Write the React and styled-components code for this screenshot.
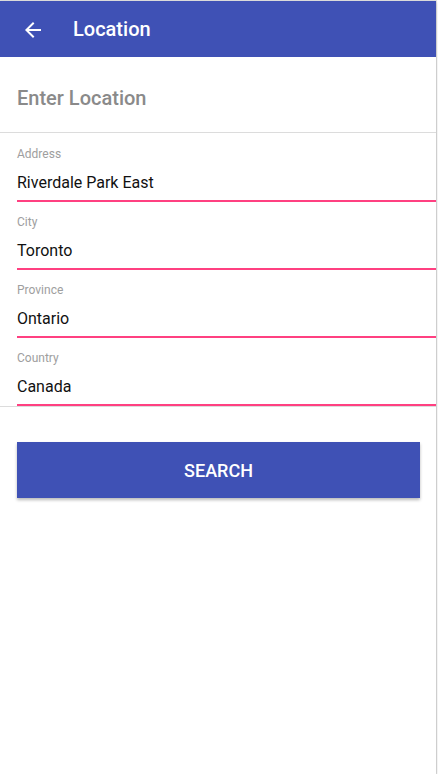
import styled, { createGlobalStyle } from 'styled-components';

const GlobalStyle = createGlobalStyle`
  html, body {
    margin: 0;
    padding: 0;
    background: #ffffff;
    font-family: 'Roboto', 'Liberation Sans', sans-serif;
  }
`;

const Screen = styled.div`
  width: 436px;
  height: 773px;
  margin-top: 1px;
  background: #ffffff;
  box-shadow: 0 1px 3px rgba(0, 0, 0, 0.25), 0 0 0 1px #e4e4e4;
  display: flex;
  flex-direction: column;
`;

const AppBar = styled.header`
  height: 56px;
  background: #3f51b5;
  display: flex;
  align-items: center;
  padding-left: 21px;
  box-sizing: border-box;
  flex-shrink: 0;
`;

const BackIcon = styled.svg`
  width: 24px;
  height: 24px;
  fill: #ffffff;
  margin-top: 1px;
`;

const Title = styled.h1`
  margin: 0 0 0 28px;
  color: #ffffff;
  font-size: 20px;
  font-weight: 500;
  line-height: 24px;
`;

const SearchRow = styled.div`
  height: 76px;
  border-bottom: 1px solid #dcdcdc;
  display: flex;
  align-items: center;
  padding-left: 17px;
  padding-top: 6px;
  box-sizing: border-box;
`;

const SearchHint = styled.div`
  color: #8a8a8a;
  font-size: 20px;
  font-weight: 500;
`;

const Fields = styled.section`
  padding: 13px 0 0 17px;
  border-bottom: 1px solid #dcdcdc;
  display: flex;
  flex-direction: column;
  gap: 12px;
`;

const Field = styled.div`
  display: flex;
  flex-direction: column;
`;

const Label = styled.div`
  color: #9e9e9e;
  font-size: 12px;
  line-height: 16px;
`;

const Value = styled.div`
  color: #111111;
  font-size: 16px;
  line-height: 24px;
  margin-top: 9px;
  padding-bottom: 5px;
  border-bottom: 2px solid #ff4081;
`;

const ButtonArea = styled.div`
  padding: 35px 16px 0 17px;
`;

const SearchButton = styled.button`
  width: 100%;
  height: 56px;
  border: none;
  background: #3f51b5;
  color: #ffffff;
  font-family: 'Roboto', 'Liberation Sans', sans-serif;
  font-size: 18px;
  font-weight: 500;
  text-transform: uppercase;
  box-shadow: 0 2px 3px rgba(0, 0, 0, 0.28);
  cursor: pointer;
`;

const fields = [
  { label: 'Address', value: 'Riverdale Park East' },
  { label: 'City', value: 'Toronto' },
  { label: 'Province', value: 'Ontario' },
  { label: 'Country', value: 'Canada' },
];

export default function App() {
  return (
    <>
      <GlobalStyle />
      <Screen>
        <AppBar>
          <BackIcon viewBox="0 0 24 24">
            <path d="M20 11H7.83l5.59-5.59L12 4l-8 8 8 8 1.41-1.41L7.83 13H20v-2z" />
          </BackIcon>
          <Title>Location</Title>
        </AppBar>
        <SearchRow>
          <SearchHint>Enter Location</SearchHint>
        </SearchRow>
        <Fields>
          {fields.map((f) => (
            <Field key={f.label}>
              <Label>{f.label}</Label>
              <Value>{f.value}</Value>
            </Field>
          ))}
        </Fields>
        <ButtonArea>
          <SearchButton>Search</SearchButton>
        </ButtonArea>
      </Screen>
    </>
  );
}
